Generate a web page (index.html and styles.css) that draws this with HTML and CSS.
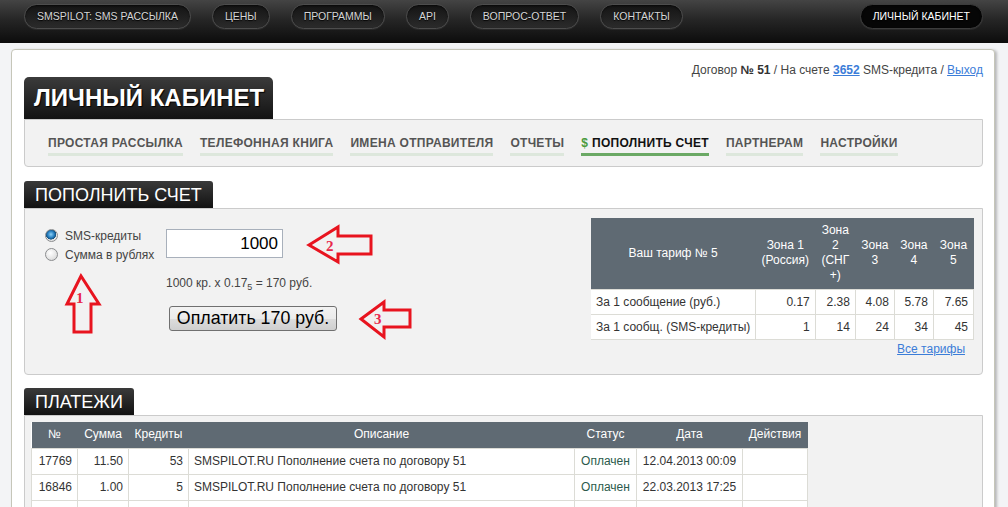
FILE: index.html
```html
<!DOCTYPE html>
<html lang="ru">
<head>
<meta charset="utf-8">
<title>Личный кабинет — SMSPILOT</title>
<link rel="stylesheet" href="styles.css">
</head>
<body>
<header class="topbar">
  <nav class="topnav">
    <a class="pill" href="#">SMSPILOT: SMS РАССЫЛКА</a>
    <a class="pill" href="#">ЦЕНЫ</a>
    <a class="pill" href="#">ПРОГРАММЫ</a>
    <a class="pill" href="#">API</a>
    <a class="pill" href="#">ВОПРОС-ОТВЕТ</a>
    <a class="pill" href="#">КОНТАКТЫ</a>
    <a class="pill pill-active" href="#">ЛИЧНЫЙ КАБИНЕТ</a>
  </nav>
</header>

<main class="page">
  <div class="account">Договор <b>№ 51</b> / На счете <a class="link strong" href="#">3652</a> SMS-кредита / <a class="link" href="#">Выход</a></div>

  <h1 class="title-tab">ЛИЧНЫЙ КАБИНЕТ</h1>
  <nav class="tabs">
    <a class="tab" href="#">ПРОСТАЯ РАССЫЛКА</a>
    <a class="tab" href="#">ТЕЛЕФОННАЯ КНИГА</a>
    <a class="tab" href="#">ИМЕНА ОТПРАВИТЕЛЯ</a>
    <a class="tab" href="#">ОТЧЕТЫ</a>
    <a class="tab tab-active" href="#"><span class="dollar">$</span> ПОПОЛНИТЬ СЧЕТ</a>
    <a class="tab" href="#">ПАРТНЕРАМ</a>
    <a class="tab" href="#">НАСТРОЙКИ</a>
  </nav>

  <section class="section">
    <h2 class="section-tab">ПОПОЛНИТЬ СЧЕТ</h2>
    <div class="box box-pay">
      <form class="payform">
        <div class="radios">
          <label class="radio-row"><input class="radio" type="radio" name="mode" checked> SMS-кредиты</label>
          <label class="radio-row"><input class="radio" type="radio" name="mode"> Сумма в рублях</label>
        </div>
        <div class="amount">
          <input class="amount-input" type="text" value="1000">
          <div class="formula">1000 кр. x 0.17<sub>5</sub> = 170 руб.</div>
          <button class="paybtn" type="button">Оплатить 170 руб.</button>
        </div>
      </form>

      <div class="tariff">
        <table class="grid tariff-table">
          <colgroup>
            <col class="c-name"><col class="c-z1"><col class="c-z2"><col class="c-z3"><col class="c-z4"><col class="c-z5">
          </colgroup>
          <thead>
            <tr><th>Ваш тариф № 5</th><th>Зона 1 (Россия)</th><th>Зона 2 (СНГ +)</th><th>Зона 3</th><th>Зона 4</th><th>Зона 5</th></tr>
          </thead>
          <tbody>
            <tr><td class="l">За 1 сообщение (руб.)</td><td>0.17</td><td>2.38</td><td>4.08</td><td>5.78</td><td>7.65</td></tr>
            <tr><td class="l">За 1 сообщ. (SMS-кредиты)</td><td>1</td><td>14</td><td>24</td><td>34</td><td>45</td></tr>
          </tbody>
        </table>
        <div class="all-tariffs"><a class="link" href="#">Все тарифы</a></div>
      </div>

      <svg class="arrows" width="400" height="167" viewBox="0 0 400 167" aria-hidden="true">
        <g fill="none" stroke="#e8141f" stroke-width="3" stroke-linejoin="miter">
          <polygon points="56,67 42,95 49,95 49,123 66,123 66,95 74,95"/>
          <polygon points="284,36 313,18 313,27 346,27 346,45 313,45 313,53"/>
          <polygon points="336,110 359,93 359,101 385,101 385,118 359,118 359,128"/>
        </g>
        <g class="arrow-num">
          <text x="51" y="94">1</text>
          <text x="301" y="42">2</text>
          <text x="349" y="115">3</text>
        </g>
      </svg>
    </div>
  </section>

  <section class="section">
    <h2 class="section-tab">ПЛАТЕЖИ</h2>
    <div class="box box-list">
      <table class="grid pay-table">
        <colgroup>
          <col class="p-no"><col class="p-sum"><col class="p-cr"><col class="p-desc"><col class="p-st"><col class="p-date"><col class="p-act">
        </colgroup>
        <thead>
          <tr><th>№</th><th>Сумма</th><th>Кредиты</th><th>Описание</th><th>Статус</th><th>Дата</th><th>Действия</th></tr>
        </thead>
        <tbody>
          <tr><td>17769</td><td>11.50</td><td>53</td><td class="l">SMSPILOT.RU Пополнение счета по договору 51</td><td class="c paid">Оплачен</td><td class="c">12.04.2013 00:09</td><td></td></tr>
          <tr><td>16846</td><td>1.00</td><td>5</td><td class="l">SMSPILOT.RU Пополнение счета по договору 51</td><td class="c paid">Оплачен</td><td class="c">22.03.2013 17:25</td><td></td></tr>
          <tr><td>&nbsp;</td><td></td><td></td><td class="l"></td><td></td><td></td><td></td></tr>
        </tbody>
      </table>
    </div>
  </section>
</main>
</body>
</html>
```

FILE: styles.css
```css
html, body {
  margin: 0;
  padding: 0;
  overflow: hidden;
}
body {
  background: #f3f4f6;
  font-family: "Liberation Sans", Arial, sans-serif;
  font-size: 12px;
  color: #444;
}

/* top bar */
.topbar {
  height: 43px;
  background: linear-gradient(#444 0%, #262626 45%, #0c0c0c 100%);
}
.topnav {
  display: flex;
  gap: 21px;
  padding: 4px 25px 0 24px;
}
.pill {
  display: block;
  height: 23px;
  line-height: 23px;
  padding: 0 12px;
  border: 1px solid #4d4d4d;
  border-radius: 13px;
  background: linear-gradient(#141414, #2b2b2b);
  box-shadow: inset 0 1px 2px rgba(0,0,0,.6), 0 1px 0 rgba(255,255,255,.06);
  color: #d6d6d6;
  font-size: 10.5px;
  text-decoration: none;
  white-space: nowrap;
  text-shadow: 0 1px 1px #000;
}
.pill-active {
  margin-left: auto;
  background: #060606;
  border-color: #3c3c3c;
  color: #fff;
}

/* page panel */
.page {
  margin: 6px 13px 0 11px;
  padding: 13px 11px 40px 12px;
  background: #fff;
  border: 1px solid #c6c6b9;
  border-radius: 4px;
  box-shadow: 2px 1px 3px rgba(0,0,0,.25);
}
.account {
  text-align: right;
  line-height: 14px;
  height: 14px;
  color: #444;
}
.account b { color: #333; }
.link {
  color: #3b7dd8;
  text-decoration: underline;
}
.link.strong { font-weight: bold; }

.title-tab {
  display: inline-block;
  margin: 0;
  height: 42px;
  line-height: 42px;
  padding: 0 9px 0 10px;
  background: linear-gradient(#3b3b3b, #131313);
  border-radius: 5px 5px 0 0;
  color: #fff;
  font-size: 24px;
  font-weight: bold;
  text-shadow: 1px 1px 1px #000;
  vertical-align: top;
}

.tabs {
  display: flex;
  gap: 17px;
  padding: 16px 0 10px 23px;
  background: #f2f2f2;
  border: 1px solid #cbcbcb;
  border-radius: 0 0 4px 4px;
}
.tab {
  display: block;
  line-height: 14px;
  padding-bottom: 3px;
  border-bottom: 3px solid #dde7dc;
  color: #555;
  font-size: 12px;
  font-weight: bold;
  letter-spacing: 0.3px;
  text-decoration: none;
  white-space: nowrap;
}
.tab-active {
  color: #111;
  border-bottom-color: #6ba965;
}
.dollar { color: #4a9a3c; }

/* sections */
.section { margin-top: 14px; }
.section + .section { margin-top: 13px; }
.section-tab {
  display: inline-block;
  margin: 0;
  height: 27px;
  line-height: 28px;
  padding: 0 11px;
  background: linear-gradient(#3a3a3a, #121212);
  border-radius: 3px 3px 0 0;
  color: #fff;
  font-size: 18px;
  font-weight: normal;
  vertical-align: top;
}
.box {
  position: relative;
  background: #f2f2f2;
  border: 1px solid #cbcbcb;
  border-radius: 0 0 4px 4px;
}
.box-pay {
  display: flex;
  align-items: flex-start;
  height: 167px;
  box-sizing: border-box;
  padding: 9px 8px 0 20px;
}
.box-list {
  padding: 6px 6px 20px 6px;
}

/* pay form */
.payform {
  display: flex;
  margin-top: 11px;
}
.radios {
  width: 121px;
  margin-top: -3px;
}
.radio-row {
  display: flex;
  align-items: center;
  gap: 7px;
  height: 19px;
  color: #444;
  font-size: 12px;
}
.radio {
  appearance: none;
  -webkit-appearance: none;
  margin: 0;
  width: 13px;
  height: 13px;
  border-radius: 50%;
  border: 1px solid #8a8c8e;
  background: radial-gradient(circle at 40% 35%, #ffffff 0%, #e4e4e4 60%, #cfcfcf 100%);
  box-sizing: border-box;
}
.radio:checked {
  background:
    radial-gradient(circle at 45% 40%, #8fd0f5 0%, #2a83c4 35%, #14507e 55%, transparent 60%),
    radial-gradient(circle at 40% 35%, #ffffff 0%, #e4e4e4 70%, #cfcfcf 100%);
}

.amount {
  display: flex;
  flex-direction: column;
  align-items: flex-start;
}
.amount-input {
  width: 117px;
  height: 29px;
  box-sizing: border-box;
  margin: 0;
  padding: 0 4px;
  border: 1px solid #a8b0bb;
  background: #fff;
  text-align: right;
  font-family: "Liberation Sans", Arial, sans-serif;
  font-size: 17px;
  color: #000;
}
.formula {
  margin-top: 18px;
  line-height: 14px;
  font-size: 12px;
  color: #444;
}
.formula sub {
  font-size: 9px;
  vertical-align: -3px;
  line-height: 0;
}
.paybtn {
  margin: 16px 0 0 3px;
  width: 168px;
  height: 25px;
  padding: 0;
  border: 1px solid #707070;
  border-radius: 3px;
  background: linear-gradient(#f3f3f3 0%, #ebebeb 50%, #dddddd 51%, #cfcfcf 100%);
  font-family: "Liberation Sans", Arial, sans-serif;
  font-size: 17.8px;
  color: #000;
}

/* arrows overlay */
.arrows {
  position: absolute;
  left: 0;
  top: 0;
  pointer-events: none;
}
.arrow-num text {
  font-family: "Liberation Serif", "Times New Roman", serif;
  font-size: 15px;
  font-weight: bold;
  fill: #e8284c;
}

/* tables */
.grid {
  border-collapse: collapse;
  table-layout: fixed;
  background: #fff;
  font-size: 12px;
  color: #333;
}
.grid th {
  background: #5f6a73;
  color: #fff;
  font-weight: normal;
  text-align: center;
  padding: 0 4px;
  line-height: 15px;
}
.grid td {
  border: 1px solid #dcdcd6;
  text-align: right;
  padding: 0 5px;
  white-space: nowrap;
}
.grid td.l { text-align: left; }
.grid td.c { text-align: center; }

.tariff {
  margin-left: auto;
}
.tariff-table { width: 383px; }
.tariff-table thead tr { height: 71px; }
.tariff-table tbody tr { height: 25px; }
.c-name { width: 164px; }
.c-z1 { width: 60px; }
.c-z2 { width: 40px; }
.c-z3 { width: 39px; }
.c-z4 { width: 39px; }
.c-z5 { width: 40px; }
.tariff-table tr > :first-child { border-left: none; }
.all-tariffs {
  text-align: right;
  padding-right: 9px;
  margin-top: 2px;
  line-height: 14px;
}

.pay-table { width: 776px; }
.pay-table thead tr { height: 26px; }
.pay-table tbody tr { height: 26px; }
.pay-table th { padding: 0 2px; }
.p-no { width: 46px; }
.p-sum { width: 51px; }
.p-cr { width: 60px; }
.p-desc { width: 386px; }
.p-st { width: 62px; }
.p-date { width: 106px; }
.p-act { width: 65px; }
.pay-table td.paid { color: #2c5a4c; }
.pay-table td.c { padding: 0 3px; }
```
